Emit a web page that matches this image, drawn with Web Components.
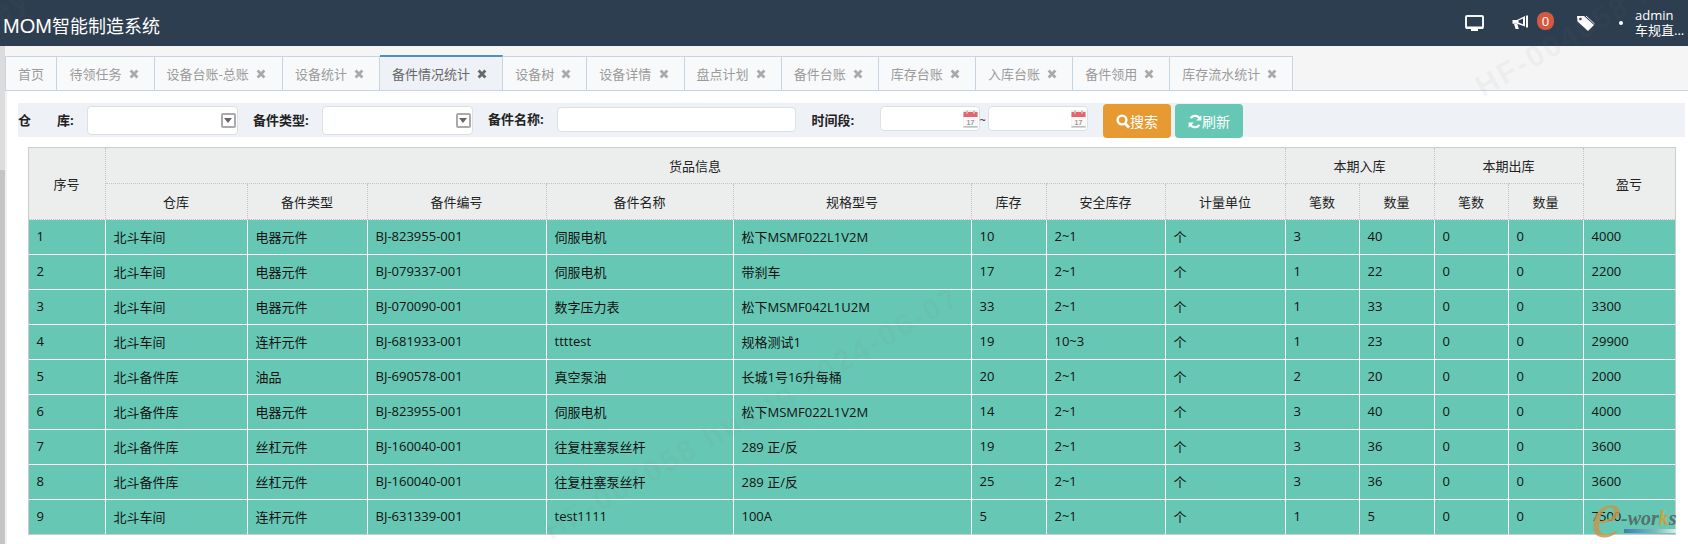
<!DOCTYPE html>
<html lang="zh"><head><meta charset="utf-8"><title>MOM</title>
<style>
html,body{margin:0;padding:0;width:1688px;height:544px;overflow:hidden;background:#fff}
body{font:13px "Open Sans","Noto Sans CJK SC",sans-serif;color:#111}
</style></head><body>
<mom-app></mom-app>
<script>
const FONT='"Open Sans","Noto Sans CJK SC",sans-serif';
function def(name,css,html,init){
  customElements.define(name,class extends HTMLElement{
    connectedCallback(){
      if(this.shadowRoot)return;
      const r=this.attachShadow({mode:'open'});
      r.innerHTML='<style>'+css+'</style>'+(typeof html==='function'?html(this):html);
      if(init)init(this,r);
    }
  });
}
def('mom-header',`
:host{display:flex;align-items:center;height:46px;background:#2d3e50;color:#fff}
.t{margin:3px 0 0 3px;font:18px "Liberation Sans","Noto Sans CJK SC",sans-serif}
.t b{font-weight:400;font-size:20px}
.s{flex:1}
svg{display:block}
.mon{margin:0 28px 0 0}
.badge{width:17px;height:18px;border-radius:8px;background:#d35a40;display:flex;align-items:center;justify-content:center;font-size:13px;margin:-4px 0 0 8px}
.spk{margin-top:-1px}
.tag{margin:0 0 0 22px}
.dot{width:4px;height:4px;border-radius:50%;background:#fff;margin:-1px 12px 0 24px}
.u{width:50px;line-height:15px;font-size:13px;margin:-1px 3px 0 0;white-space:nowrap}
`,`<div class="t"><b>MOM</b>智能制造系统</div><div class="s"></div>
<svg class="mon" width="19" height="17" viewBox="0 0 19 17"><rect x="1" y="1" width="17" height="12" rx="1" fill="none" stroke="#f2f5f8" stroke-width="2"/><rect x="1" y="11.5" width="17" height="2.5" fill="#fff"/><rect x="6" y="14" width="7" height="2" fill="#fff"/></svg>
<svg class="spk" width="17" height="15" viewBox="0 0 17 15"><path d="M0.5 5 H5 L13 1 V11.5 L5 8.8 H0.5Z" fill="#fff"/><path d="M2 9 H5.4 L6.8 14 H3.6Z" fill="#fff"/><path d="M14 0.5h2v12h-2z" fill="#fff"/><path d="M11 3.6 V9.2 L6.5 7.6 V5.6Z" fill="#2d3e50"/></svg>
<div class="badge">0</div>
<svg class="tag" width="19" height="17" viewBox="0 0 19 17"><path d="M1 1 H8 L18 10 L12 16 L1.5 6.5Z" fill="#fff"/><circle cx="4.4" cy="4" r="1.3" fill="#2d3e50"/><path d="M10 1 L18.5 8.8" stroke="#dfe6ee" stroke-width="1" fill="none"/></svg>
<div class="dot"></div>
<div class="u">admin<br>车规直...</div>`);

def('mom-tab',`
:host{display:flex;align-items:center;height:33px;padding:0 15px 0 12px;border-top:1px solid #c7d4e4;border-right:1px solid #c7d4e4;background:#f8f9fa;color:#9b9b9b;font-size:13px;white-space:nowrap;box-sizing:content-box}
:host([first]){border-left:1px solid #c7d4e4;padding-right:12.4px}
:host([active]){background:#eef1f6;color:#666;border-top:2px solid #4d90c4}
svg{margin-left:7.15px;display:block}
`,h=>`<slot></slot>`+(h.hasAttribute('first')?'':`<svg width="10" height="10" viewBox="0 0 10 10"><path d="M1.6 1.6 8.4 8.4M8.4 1.6 1.6 8.4" stroke="${h.hasAttribute('active')?'#666':'#aaa'}" stroke-width="2.8" fill="none"/></svg>`));

def('mom-tabs',`
:host{display:flex;align-items:flex-end;height:44px;background:#f5f5f5;border-bottom:1px solid #c7d4e4;margin-left:5px}
`,`<slot></slot>`);

def('mom-select',`
:host{display:flex;align-items:center;justify-content:flex-end;box-sizing:border-box;width:150.5px;height:29px;background:#fff;border:1px solid #dcdfe3;border-radius:4px;padding-right:1px}
.a{box-sizing:border-box;width:15px;height:15px;border:2px solid #aaa;border-radius:2px;background:#fff;display:flex;align-items:center;justify-content:center}
.a i{width:0;height:0;border:4px solid transparent;border-top:5px solid #666;border-bottom:0}
`,`<div class="a"><i></i></div>`);

def('mom-input',`
:host{display:block;box-sizing:border-box;width:239.5px;height:25px;margin-top:-1px;background:#fff;border:1px solid #dcdfe3;border-radius:4px}
`,``);

def('mom-date',`
:host{display:flex;align-items:flex-end;justify-content:flex-end;box-sizing:border-box;width:99.6px;height:25px;margin-top:-3px;background:#fff;border:1px solid #dcdfe3;border-radius:4px}
svg{display:block;margin:0 1px 2px 0}
`,`<svg width="15" height="18" viewBox="0 0 15 18"><rect width="15" height="18" fill="#eeeeee"/><rect x="0.5" y="2" width="14" height="5" fill="#e8636b"/><rect x="3" y="0.5" width="2" height="3.5" rx="1" fill="#bbb"/><rect x="10" y="0.5" width="2" height="3.5" rx="1" fill="#bbb"/><rect x="0.5" y="7" width="14" height="9" fill="#fafafa"/><rect x="0.5" y="16" width="14" height="1.5" fill="#bdbdbd"/><text x="7.5" y="14.5" text-anchor="middle" font-family="Liberation Sans" font-size="7" fill="#999">17</text></svg>`);

def('mom-button',`
:host{display:flex;align-items:center;justify-content:center;width:68px;height:34px;margin-top:1px;border-radius:4px;color:#fff;font-size:14px;background:var(--bg);box-sizing:border-box;padding-top:1px}
svg{display:block;margin-right:0}
`,h=>(h.getAttribute('icon')==='search'
 ?`<svg width="14" height="15" viewBox="0 0 14 15"><circle cx="6" cy="6" r="4.4" fill="none" stroke="#fff" stroke-width="2.4"/><path d="M9 9.4 13 13.6" stroke="#fff" stroke-width="2.8"/></svg>`
 :`<svg width="14" height="15" viewBox="0 0 14 15"><path d="M12 5.2A5.3 5.3 0 0 0 2.6 4.2" fill="none" stroke="#fff" stroke-width="2.2"/><path d="M13.4 1.2V6.6H8.2Z" fill="#fff"/><path d="M2 9.8A5.3 5.3 0 0 0 11.4 10.8" fill="none" stroke="#fff" stroke-width="2.2"/><path d="M0.6 13.8V8.4H5.8Z" fill="#fff"/></svg>`)+`<slot></slot>`);

def('mom-filter',`
:host{display:flex;align-items:center;height:34px;margin:12px 3px 0 11px;background:#eef1f6;font-weight:700;font-size:13px;color:#222}
.l{flex:none;white-space:pre;margin-top:-2px}
`,`<span class="l" style="width:69px">仓　　库:</span><mom-select></mom-select>
<span class="l" style="width:56.5px;margin-left:15.5px;margin-right:12.5px">备件类型:</span><mom-select></mom-select>
<span class="l" style="width:57.5px;margin-left:15.5px;margin-right:11px;margin-top:-4px">备件名称:</span><mom-input></mom-input>
<span class="l" style="width:45px;margin-left:15.5px;margin-right:23.5px">时间段:</span><mom-date></mom-date>
<span class="l" style="width:8.4px;font-weight:400;font-size:11px;line-height:11px">~</span><mom-date></mom-date>
<mom-button icon="search" style="--bg:#e89a32;margin-left:15.4px;font-weight:400">搜索</mom-button>
<mom-button icon="refresh" style="--bg:#66c8b4;margin-left:4px;font-weight:400">刷新</mom-button>`);

const ROWS=[
['1','北斗车间','电器元件','BJ-823955-001','伺服电机','松下MSMF022L1V2M','10','2~1','个','3','40','0','0','4000'],
['2','北斗车间','电器元件','BJ-079337-001','伺服电机','带刹车','17','2~1','个','1','22','0','0','2200'],
['3','北斗车间','电器元件','BJ-070090-001','数字压力表','松下MSMF042L1U2M','33','2~1','个','1','33','0','0','3300'],
['4','北斗车间','连杆元件','BJ-681933-001','ttttest','规格测试1','19','10~3','个','1','23','0','0','29900'],
['5','北斗备件库','油品','BJ-690578-001','真空泵油','长城1号16升每桶','20','2~1','个','2','20','0','0','2000'],
['6','北斗备件库','电器元件','BJ-823955-001','伺服电机','松下MSMF022L1V2M','14','2~1','个','3','40','0','0','4000'],
['7','北斗备件库','丝杠元件','BJ-160040-001','往复柱塞泵丝杆','289 正/反','19','2~1','个','3','36','0','0','3600'],
['8','北斗备件库','丝杠元件','BJ-160040-001','往复柱塞泵丝杆','289 正/反','25','2~1','个','3','36','0','0','3600'],
['9','北斗车间','连杆元件','BJ-631339-001','test1111','100A','5','2~1','个','1','5','0','0','7500']];
const W=[77,142,120,179,187,238,75,119,120,74,75,74,75,92];
const H2=['仓库','备件类型','备件编号','备件名称','规格型号','库存','安全库存','计量单位','笔数','数量','笔数','数量'];
def('mom-table',`
:host{display:block;margin:10px 0 0 20.5px;width:1647px}
table{border-collapse:collapse;table-layout:fixed;width:1647px;border:1px solid #ccc;font-size:13px;color:#111}
th{font-weight:400;background:#eceeee;border:1px dotted #c4c4c4;padding:0 0 1px;text-align:center;color:#222}
tr.a th{height:34px}
tr.b th{height:34px}
td{background:#66c8b4;border:1px dotted #fff;height:32px;padding:0 0 2px 8px;white-space:nowrap;overflow:hidden}
`,`<table><colgroup>${W.map(w=>`<col style="width:${w}px">`).join('')}</colgroup>
<thead><tr class="a"><th rowspan="2">序号</th><th colspan="8">货品信息</th><th colspan="2">本期入库</th><th colspan="2">本期出库</th><th rowspan="2">盈亏</th></tr>
<tr class="b">${H2.map(t=>`<th>${t}</th>`).join('')}</tr></thead>
<tbody>${ROWS.map(r=>`<tr>${r.map(c=>`<td>${c}</td>`).join('')}</tr>`).join('')}</tbody></table>`);

def('mom-watermark',`
:host{position:absolute;left:0;top:0;width:1688px;height:544px;overflow:hidden;pointer-events:none;z-index:5}
span{position:absolute;transform-origin:0 50%;transform:rotate(-30deg);font:700 30px "Liberation Sans",sans-serif;color:rgba(120,120,120,.075);white-space:nowrap;letter-spacing:2.5px}
`,`<span style="left:546px;top:515px">HF-004058 huang 2024-06-07</span>
<span style="left:1478px;top:72px">HF-004058 huang 2024-06-07</span>
<span style="left:-6px;top:-2px">ey</span>`);

def('mom-logo',`
:host{position:absolute;left:1593px;top:508px;width:90px;height:30px;z-index:6;pointer-events:none;display:block}
.e{position:absolute;left:-2px;top:-30px;font:italic 400 68px/72px "Liberation Serif",serif;color:#c6974f;opacity:.82}
.w{position:absolute;left:28px;top:-1px;font:italic 700 20px/22px "Liberation Serif",serif;color:#56706c}
.w b{color:#c9a43f}
.u{position:absolute;left:31px;top:21px;width:52px;height:4px;background:linear-gradient(90deg,#3f7fb0,#7fb8c0 60%,#d8efe8)}
`,`<span class="e">e</span><span class="w">-wor<b>k</b>s</span><div class="u"></div>`);

def('mom-app',`
:host{display:block;position:relative;width:1688px;height:544px;overflow:hidden;font:13px ${FONT}}
.body{position:relative}
.strip{position:absolute;left:0;top:0;bottom:0;width:5px;height:498px;background:linear-gradient(#dcdcdc 0,#dcdcdc 124px,#c4c4c4 124px)}
.side{position:absolute;left:5px;top:45px;width:2px;height:453px;background:#eef1f6}
`,`<mom-header></mom-header>
<div class="body"><div class="strip"></div><div class="side"></div>
<mom-tabs>
<mom-tab first>首页</mom-tab><mom-tab>待领任务</mom-tab><mom-tab style="padding-right:16px">设备台账-总账</mom-tab><mom-tab>设备统计</mom-tab><mom-tab active>备件情况统计</mom-tab><mom-tab>设备树</mom-tab><mom-tab>设备详情</mom-tab><mom-tab>盘点计划</mom-tab><mom-tab>备件台账</mom-tab><mom-tab>库存台账</mom-tab><mom-tab>入库台账</mom-tab><mom-tab>备件领用</mom-tab><mom-tab>库存流水统计</mom-tab>
</mom-tabs>
<div style="margin-left:7px"><mom-filter></mom-filter><mom-table></mom-table></div></div>
<mom-watermark></mom-watermark><mom-logo></mom-logo>`);
</script></body></html>
